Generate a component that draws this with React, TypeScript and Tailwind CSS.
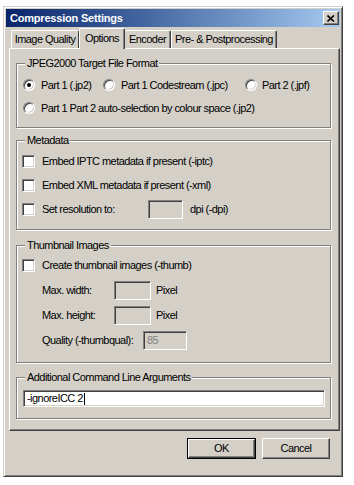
import React from "react";

const raised =
  "border border-t-white border-l-white border-r-[#404040] border-b-[#404040] shadow-[inset_-1px_-1px_#808080]";
const sunken =
  "border border-t-[#808080] border-l-[#808080] border-r-white border-b-white shadow-[inset_1px_1px_#404040,inset_-1px_-1px_#d4d0c8]";

function Radio({ checked = false }: { checked?: boolean }) {
  return (
    <div className={`w-[12px] h-[12px] rounded-full bg-white flex items-center justify-center shrink-0 ${sunken}`}>
      {checked && <div className="w-[4px] h-[4px] rounded-full bg-black" />}
    </div>
  );
}

function Check() {
  return <div className={`w-[13px] h-[13px] bg-white shrink-0 ${sunken}`} />;
}

function Field({ w, children, white = false }: { w: string; children?: React.ReactNode; white?: boolean }) {
  return (
    <div className={`${w} h-[19px] ${white ? "bg-white" : "bg-[#d4d0c8]"} flex items-center pl-[3px] shrink-0 ${sunken}`}>
      {children}
    </div>
  );
}

function Group({ title, h, className = "", children }: { title: string; h: string; className?: string; children: React.ReactNode }) {
  return (
    <fieldset
      className={`w-[315px] ${h} border border-[#808080] shadow-[inset_1px_1px_#fff,1px_1px_#fff] ${className}`}
    >
      <legend className="ml-[8px] px-[2px] leading-[13px] bg-[#d4d0c8]">{title}</legend>
      {children}
    </fieldset>
  );
}

export default function App() {
  return (
    <div className="w-[354px] h-[485px] bg-white pt-[6px] pl-[3px] font-['Liberation_Sans',Arial,sans-serif] text-[11px] leading-[13px] tracking-[-0.55px] text-black">
      <div
        className={`w-[340px] h-[471px] bg-[#d4d0c8] border border-t-[#d4d0c8] border-l-[#d4d0c8] border-r-[#404040] border-b-[#404040] shadow-[inset_1px_1px_#fff,inset_-1px_-1px_#808080] p-[2px] flex flex-col`}
      >
        {/* title bar */}
        <div className="h-[18px] flex items-center justify-between pl-[4px] pr-[1px] bg-gradient-to-r from-[#0a246a] to-[#a6caf0]">
          <span className="text-white font-bold text-[11px] tracking-[-0.2px]">Compression Settings</span>
          <div className={`w-[16px] h-[14px] bg-[#d4d0c8] flex items-center justify-center ${raised}`}>
            <svg width="8" height="7" viewBox="0 0 8 7">
              <path d="M0.5 0.5 L7 6.5 M7 0.5 L0.5 6.5" stroke="#000" strokeWidth="1.6" />
            </svg>
          </div>
        </div>

        {/* tabs */}
        <div className="mt-[1px] ml-[3px] h-[20px] flex items-end pl-[2px] relative z-10">
          <div className="w-[68px] h-[18px] flex items-center justify-center border-t border-l border-t-white border-l-white border-r border-r-[#404040] rounded-t-[2px]">
            Image Quality
          </div>
          <div className="w-[46px] h-[21px] -mb-px bg-[#d4d0c8] flex items-center justify-center pb-[2px] border-t border-l border-t-white border-l-white border-r border-r-[#404040] shadow-[inset_-1px_0_#808080] rounded-t-[2px]">
            Options
          </div>
          <div className="w-[46px] h-[18px] flex items-center justify-center border-t border-t-white border-r border-r-[#404040] shadow-[inset_-1px_0_#808080] rounded-t-[2px]">
            Encoder
          </div>
          <div className="w-[106px] h-[18px] flex items-center justify-center border-t border-l border-t-white border-l-white border-r border-r-[#404040] shadow-[inset_-1px_0_#808080] rounded-t-[2px]">
            Pre- &amp; Postprocessing
          </div>
        </div>

        {/* panel */}
        <div className={`ml-[3px] h-[383px] pt-[8px] pl-[6px] flex flex-col ${raised}`}>
          <Group title="JPEG2000 Target File Format" h="h-[71px]">
            <div className="flex flex-col gap-[7px] pt-[7px] pl-[6px]">
              <div className="flex h-[16px] items-center">
                <div className="w-[80px] flex items-center gap-[6px]">
                  <Radio checked />
                  <span>Part 1 (.jp2)</span>
                </div>
                <div className="w-[142px] flex items-center gap-[6px]">
                  <Radio />
                  <span>Part 1 Codestream (.jpc)</span>
                </div>
                <div className="flex items-center gap-[5px]">
                  <Radio />
                  <span>Part 2 (.jpf)</span>
                </div>
              </div>
              <div className="flex h-[16px] items-center gap-[6px]">
                <Radio />
                <span>Part 1 Part 2 auto-selection by colour space (.jp2)</span>
              </div>
            </div>
          </Group>

          <Group title="Metadata" h="h-[96px]" className="mt-[6px]">
            <div className="flex flex-col gap-[4px] pt-[4px] pl-[5px]">
              <div className="flex h-[20px] items-center gap-[7px]">
                <Check />
                <span>Embed IPTC metadata if present (-iptc)</span>
              </div>
              <div className="flex h-[20px] items-center gap-[7px]">
                <Check />
                <span>Embed XML metadata if present (-xml)</span>
              </div>
              <div className="flex h-[20px] items-center gap-[7px]">
                <Check />
                <span className="w-[99px]">Set resolution to:</span>
                <Field w="w-[35px]" />
                <span>dpi (-dpi)</span>
              </div>
            </div>
          </Group>

          <Group title="Thumbnail Images" h="h-[124px]" className="mt-[9px]">
            <div className="flex flex-col gap-[5px] pt-[3px] pl-[5px]">
              <div className="flex h-[20px] items-center gap-[7px]">
                <Check />
                <span>Create thumbnail images (-thumb)</span>
              </div>
              <div className="flex h-[20px] items-center pl-[20px]">
                <span className="w-[72px]">Max. width:</span>
                <Field w="w-[37px]" />
                <span className="ml-[5px]">Pixel</span>
              </div>
              <div className="flex h-[20px] items-center pl-[20px]">
                <span className="w-[72px]">Max. height:</span>
                <Field w="w-[37px]" />
                <span className="ml-[5px]">Pixel</span>
              </div>
              <div className="flex h-[20px] items-center pl-[20px]">
                <span className="w-[101px]">Quality (-thumbqual):</span>
                <Field w="w-[44px]">
                  <span className="text-[#808080]">85</span>
                </Field>
              </div>
            </div>
          </Group>

          <Group title="Additional Command Line Arguments" h="h-[48px]" className="mt-[8px]">
            <div className="pt-[6px] pl-[6px]">
              <div className={`w-[302px] h-[17px] bg-white flex items-center pl-[3px] ${sunken}`}>
                <span>-ignoreICC 2</span>
                <span className="w-px h-[12px] bg-black ml-[1px]" />
              </div>
            </div>
          </Group>
        </div>

        {/* buttons */}
        <div className="mt-[7px] flex justify-end gap-[6px] pr-[10px]">
          <div className="w-[69px] h-[21px] border border-black">
            <div className={`w-full h-full flex items-center justify-center ${raised}`}>OK</div>
          </div>
          <div className={`w-[68px] h-[21px] flex items-center justify-center ${raised}`}>Cancel</div>
        </div>
      </div>
    </div>
  );
}
